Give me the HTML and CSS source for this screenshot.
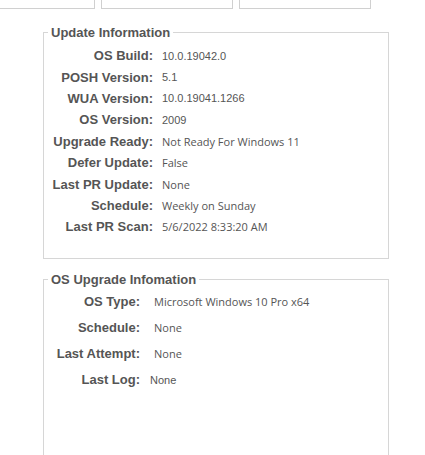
FILE: index.html
```html
<!DOCTYPE html>
<html lang="en">
    <head>
        <meta charset="UTF-8">
        <title>Update Information</title>
        <link rel="stylesheet" href="styles.css">
    </head>
<body>

<div class="tabs">
    <div class="tab tab-first"></div>
    <div class="tab"></div>
    <div class="tab"></div>
</div>

<fieldset class="panel panel-update">
    <legend>Update Information</legend>
    <div class="info-grid">
        <div class="label">OS Build:</div><div class="value plain">10.0.19042.0</div>
        <div class="label">POSH Version:</div><div class="value plain">5.1</div>
        <div class="label">WUA Version:</div><div class="value plain">10.0.19041.1266</div>
        <div class="label">OS Version:</div><div class="value plain">2009</div>
        <div class="label">Upgrade Ready:</div><div class="value">Not Ready For Windows 11</div>
        <div class="label">Defer Update:</div><div class="value">False</div>
        <div class="label">Last PR Update:</div><div class="value">None</div>
        <div class="label">Schedule:</div><div class="value">Weekly on Sunday</div>
        <div class="label">Last PR Scan:</div><div class="value">5/6/2022 8:33:20 AM</div>
    </div>
</fieldset>

<fieldset class="panel panel-upgrade">
    <legend>OS Upgrade Infomation</legend>
    <div class="info-grid upgrade-grid">
        <div class="label">OS Type:</div><div class="value">Microsoft Windows 10 Pro x64</div>
        <div class="label">Schedule:</div><div class="value">None</div>
        <div class="label">Last Attempt:</div><div class="value">None</div>
        <div class="label">Last Log:</div><div class="value plain shift">None</div>
    </div>
</fieldset>

</body>
</html>
```

FILE: styles.css
```css
body {
    margin: 0;
    background: #fff;
    font-family: "Liberation Sans", Arial, sans-serif;
    color: #555;
    height: 455px;
    overflow: hidden;
}
.tabs {
    display: flex;
    gap: 6px;
    height: 9px;
    overflow: hidden;
}
.tab {
    width: 130px;
    height: 8px;
    border: 1px solid #d0d0d0;
    border-top: none;
}
.tab-first {
    margin-left: -10px;
    width: 103px;
}
.panel {
    margin: 0 0 0 43px;
    width: 346px;
    box-sizing: border-box;
    border: 1px solid #d6d6d6;
    padding: 0 4px;
}
.panel legend {
    padding: 0 3px;
    font-size: 13px;
    font-weight: bold;
    color: #555;
    line-height: 15px;
}
.panel-update {
    margin-top: 16px;
    padding-bottom: 20px;
}
.panel-upgrade {
    margin-top: 13px;
    height: 200px;
}
.info-grid {
    display: grid;
    grid-template-columns: 105px 1fr;
    grid-auto-rows: 21.4px;
    column-gap: 9px;
    align-items: center;
    margin-top: 5px;
}
.upgrade-grid {
    grid-template-columns: 92px 1fr;
    grid-auto-rows: 26px;
    column-gap: 14px;
    margin-top: 2px;
}
.label {
    text-align: right;
    font-size: 13px;
    font-weight: bold;
    color: #555;
    white-space: nowrap;
}
.value {
    font-family: "Open Sans", sans-serif;
    font-size: 11px;
    color: #555;
    white-space: nowrap;
}
.value.plain {
    font-family: "Liberation Sans", Arial, sans-serif;
}
.value.shift {
    margin-left: -4px;
}
```
